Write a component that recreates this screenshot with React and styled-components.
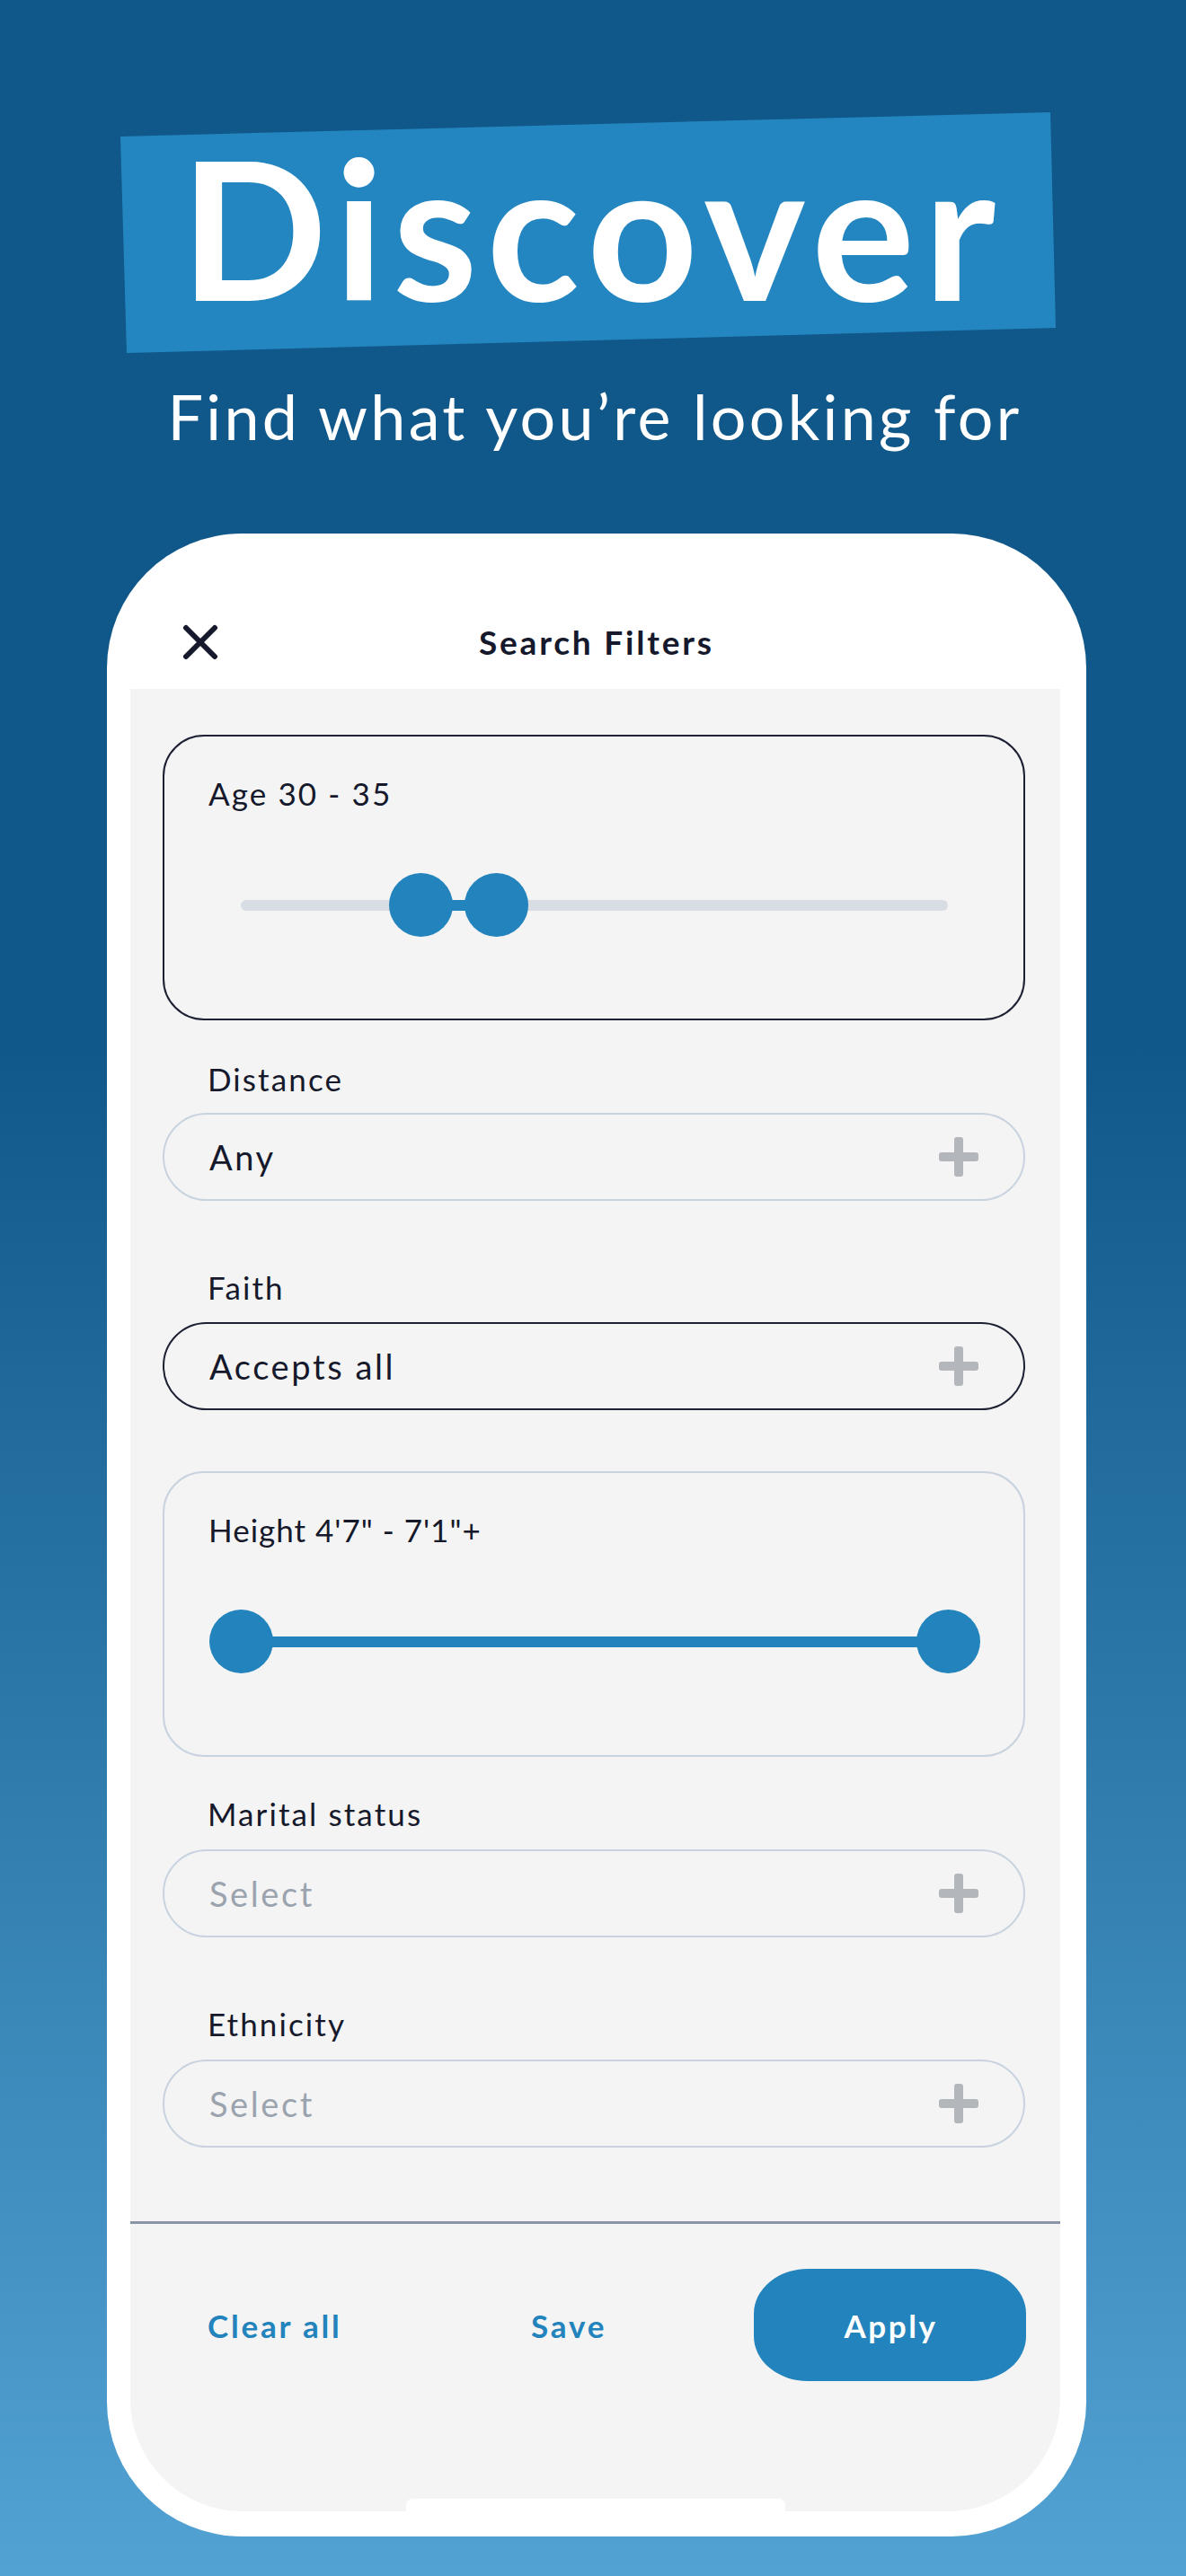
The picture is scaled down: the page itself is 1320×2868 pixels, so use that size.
import React from "react";
import styled, { createGlobalStyle } from "styled-components";

const GlobalStyle = createGlobalStyle`
  html, body { margin: 0; padding: 0; }
  body { font-family: Lato, "Open Sans", "DejaVu Sans", sans-serif; }
  * { box-sizing: border-box; }
`;

const Page = styled.div`
  width: 1320px;
  height: 2868px;
  overflow: hidden;
  background: linear-gradient(180deg, #10588a 0%, #10588a 40.5%, #52a2d3 100%);
  display: flex;
  flex-direction: column;
  padding-top: 125px;
`;

const Banner = styled.div`
  margin-left: 134px;
  width: 1041px;
  height: 268px;
  background: #2486c0;
  clip-path: polygon(0 27px, 1035px 0, 100% 240px, 7px 100%);
  display: flex;
  justify-content: center;
  align-items: flex-start;
  padding: 20px 0 0 10px;
`;

const BannerText = styled.h1`
  margin: 0;
  font-family: Lato, sans-serif;
  font-weight: 700;
  font-size: 215px;
  line-height: 215px;
  letter-spacing: 10px;
  color: #ffffff;
`;

const Subtitle = styled.p`
  margin: 28px 0 0 0;
  padding-left: 4px;
  text-align: center;
  font-family: Lato, sans-serif;
  font-weight: 400;
  font-size: 70px;
  line-height: 84px;
  letter-spacing: 3.3px;
  color: #ffffff;
`;

const Phone = styled.div`
  margin-top: 89px;
  margin-left: 119px;
  width: 1090px;
  height: 2230px;
  flex-shrink: 0;
  background: #ffffff;
  border-radius: 150px;
  padding: 0 29px 28px 26px;
  display: flex;
  flex-direction: column;
`;

const Header = styled.div`
  height: 173px;
  flex-shrink: 0;
  display: grid;
  grid-template-columns: 1fr auto 1fr;
  align-items: end;
  padding: 0 58px 32px 58px;
`;

const Title = styled.div`
  font-family: Lato, sans-serif;
  font-weight: 700;
  font-size: 37px;
  line-height: 40px;
  letter-spacing: 2.8px;
  padding-left: 2.8px;
  color: #15192b;
`;

const Screen = styled.div`
  flex: 1;
  min-height: 0;
  background: #f4f4f4;
  border-radius: 0 0 125px 125px;
  display: flex;
  flex-direction: column;
  position: relative;
  overflow: hidden;
`;

const Scroll = styled.div`
  flex: 1;
  min-height: 0;
  overflow: hidden;
  padding: 51px 39px 0 36px;
  display: flex;
  flex-direction: column;
`;

const Card = styled.div`
  flex-shrink: 0;
  height: 318px;
  margin-top: ${(p) => p.$mt || 0}px;
  border: 2px solid ${(p) => (p.$active ? "#1d2133" : "#c9d3df")};
  border-radius: 46px;
  padding-top: 42px;
`;

const Label = styled.div`
  margin-top: ${(p) => p.$mt || 0}px;
  margin-left: ${(p) => p.$ml ?? 50}px;
  font-family: Lato, sans-serif;
  font-weight: 400;
  font-size: 35px;
  line-height: 42px;
  letter-spacing: ${(p) => (p.$tight ? 1 : 2.1)}px;
  color: #15192b;
`;

const SliderWrap = styled.div`
  position: relative;
  height: 71px;
  margin: 68px 84px 0 85px;
`;

const Track = styled.div`
  position: absolute;
  left: 0;
  right: 0;
  top: 29.5px;
  height: 12px;
  border-radius: 6px;
  background: #d8dde3;
`;

const Fill = styled.div`
  position: absolute;
  top: 29.5px;
  height: 12px;
  background: #2283bd;
`;

const Thumb = styled.div`
  position: absolute;
  top: 0;
  width: 71px;
  height: 71px;
  border-radius: 50%;
  background: #2283bd;
`;

const Select = styled.div`
  flex-shrink: 0;
  margin-top: ${(p) => p.$mt || 0}px;
  height: 98px;
  border: 2px solid ${(p) => (p.$active ? "#1d2133" : "#c9d3df")};
  border-radius: 49px;
  padding: 0 50px;
  display: flex;
  align-items: center;
  justify-content: space-between;
`;

const SelectValue = styled.span`
  font-family: Lato, sans-serif;
  font-weight: 400;
  font-size: 38px;
  line-height: 46px;
  letter-spacing: 2.6px;
  color: ${(p) => (p.$placeholder ? "#9ba3ae" : "#15192b")};
`;

const Footer = styled.div`
  flex-shrink: 0;
  height: 323px;
  border-top: 3px solid #8a94a6;
  padding: 50px 38px 0 86px;
  display: grid;
  grid-template-columns: 360px 1fr 303px;
  grid-template-rows: 125px;
  align-items: center;
`;

const TextButton = styled.button`
  justify-self: start;
  border: 0;
  padding: 0;
  background: none;
  font-family: Lato, sans-serif;
  font-weight: 700;
  font-size: 35px;
  line-height: 42px;
  letter-spacing: 2.8px;
  color: #2283bd;
`;

const ApplyButton = styled.button`
  width: 303px;
  height: 125px;
  border: 0;
  padding: 0 0 0 2px;
  border-radius: 60px / 50px;
  background: #2283bd;
  color: #ffffff;
  font-family: Lato, sans-serif;
  font-weight: 700;
  font-size: 35px;
  line-height: 42px;
  letter-spacing: 2.6px;
`;

const HomeIndicator = styled.div`
  position: absolute;
  bottom: 0;
  left: 50%;
  transform: translateX(-50%);
  width: 422px;
  height: 14px;
  border-radius: 7px 7px 0 0;
  background: #ffffff;
`;

const CloseIcon = () => (
  <svg width="40" height="40" viewBox="0 0 40 40" fill="none">
    <path d="M4 4L36 36M36 4L4 36" stroke="#15192b" strokeWidth="6" strokeLinecap="round" />
  </svg>
);

const PlusIcon = () => (
  <svg width="44" height="44" viewBox="0 0 44 44">
    <rect x="17" y="0" width="10" height="44" rx="3" fill="#b3b7bc" />
    <rect x="0" y="17" width="44" height="10" rx="3" fill="#b3b7bc" />
  </svg>
);

const RangeSlider = ({ min, max, low, high, filled }) => {
  const a = ((low - min) / (max - min)) * 100;
  const b = ((high - min) / (max - min)) * 100;
  return (
    <SliderWrap>
      {!filled && <Track />}
      <Fill style={{ left: `${a}%`, width: `${b - a}%` }} />
      <Thumb style={{ left: `calc(${a}% - 35.5px)` }} />
      <Thumb style={{ left: `calc(${b}% - 35.5px)` }} />
    </SliderWrap>
  );
};

const Field = ({ label, value, placeholder, active, mt, gap }) => (
  <>
    <Label $mt={mt}>{label}</Label>
    <Select $mt={gap} $active={active}>
      <SelectValue $placeholder={!value}>{value || placeholder}</SelectValue>
      <PlusIcon />
    </Select>
  </>
);

export default function App() {
  return (
    <>
      <GlobalStyle />
      <Page>
        <Banner>
          <BannerText>Discover</BannerText>
        </Banner>
        <Subtitle>Find what you’re looking for</Subtitle>
        <Phone>
          <Header>
            <CloseIcon />
            <Title>Search Filters</Title>
            <span />
          </Header>
          <Screen>
            <Scroll>
              <Card $active>
                <Label $ml={49}>Age 30 - 35</Label>
                <RangeSlider min={18} max={65} low={30} high={35} />
              </Card>
              <Field label="Distance" value="Any" mt={44} gap={17} />
              <Field label="Faith" value="Accepts all" active mt={75} gap={18} />
              <Card $mt={68}>
                <Label $ml={49} $tight>Height 4'7" - 7'1"+</Label>
                <RangeSlider min={0} max={100} low={0} high={100} filled />
              </Card>
              <Field label="Marital status" placeholder="Select" mt={42} gap={19} />
              <Field label="Ethnicity" placeholder="Select" mt={75} gap={19} />
            </Scroll>
            <Footer>
              <TextButton>Clear all</TextButton>
              <TextButton>Save</TextButton>
              <ApplyButton>Apply</ApplyButton>
            </Footer>
            <HomeIndicator />
          </Screen>
        </Phone>
      </Page>
    </>
  );
}
